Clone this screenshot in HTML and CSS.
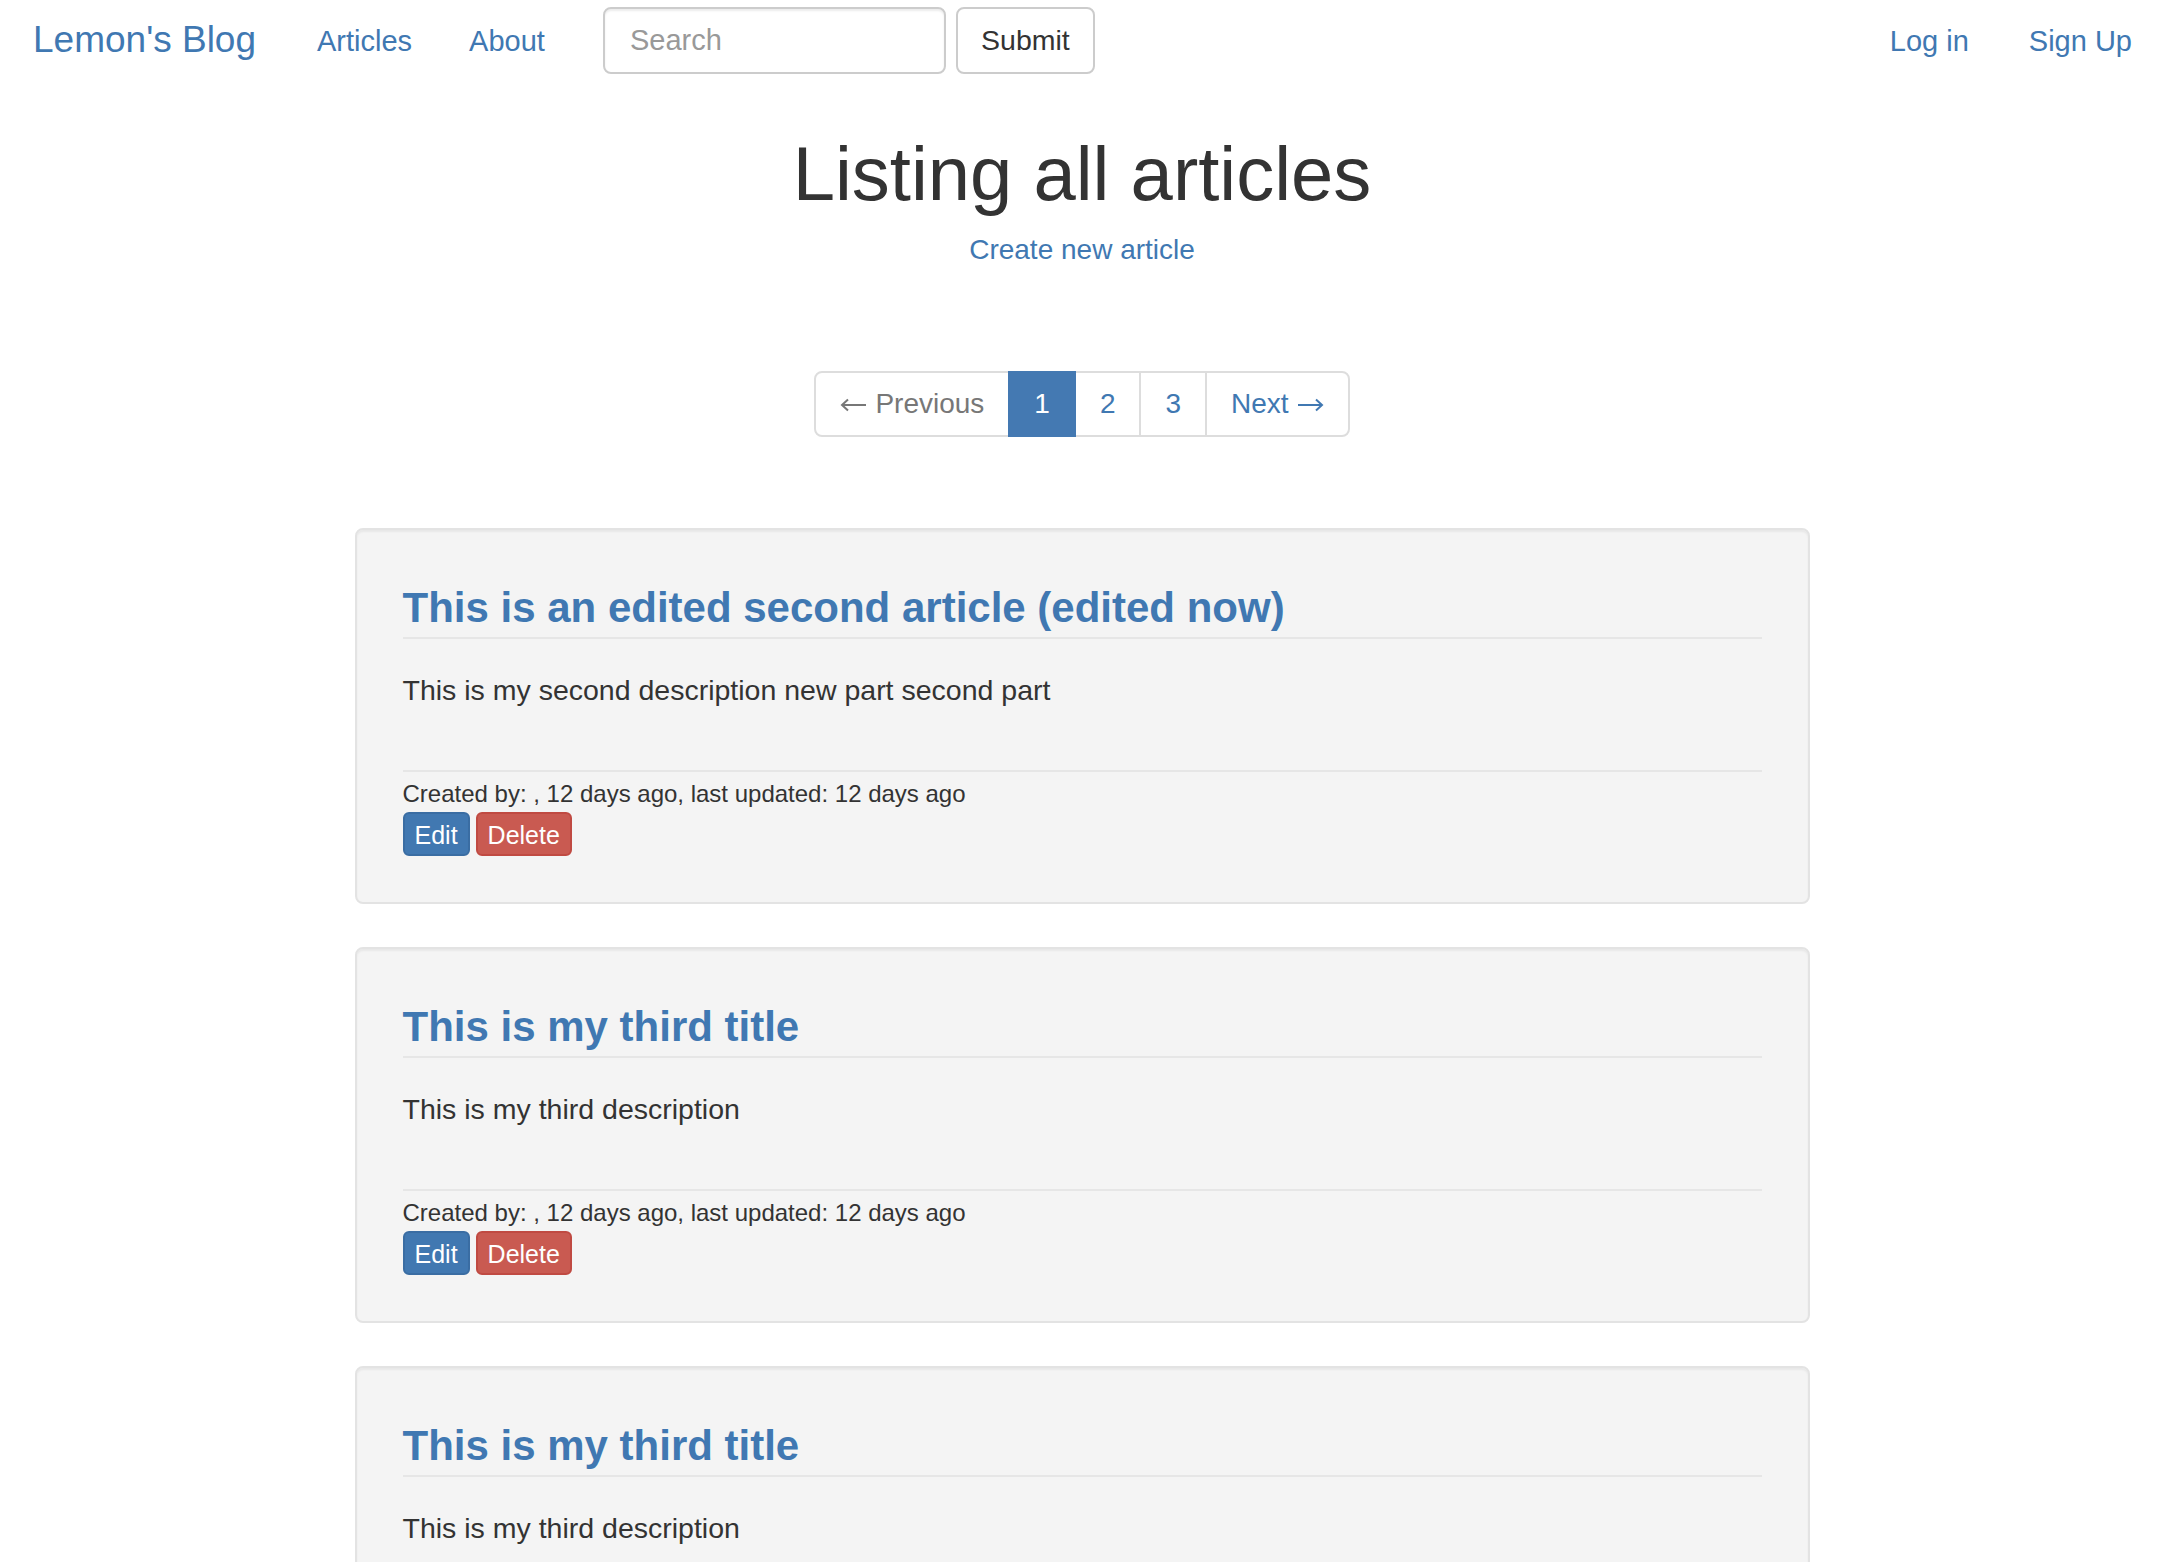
FILE: index.html
```html
<!DOCTYPE html>
<html lang="en">
<head>
<meta charset="utf-8">
<title>Lemon's Blog</title>
<link rel="stylesheet" href="styles.css">
</head>
<body>
<nav class="navbar">
  <a class="brand" href="#">Lemon's Blog</a>
  <a class="nav-link nav-articles" href="#">Articles</a>
  <a class="nav-link nav-about" href="#">About</a>
  <form class="search-form">
    <input class="search-input" type="text" placeholder="Search">
    <button class="submit-btn" type="button">Submit</button>
  </form>
  <div class="nav-right">
    <a class="nav-link" href="#">Log in</a>
    <a class="nav-link nav-signup" href="#">Sign Up</a>
  </div>
</nav>

<main class="main">
  <h1 class="page-title">Listing all articles</h1>
  <a class="create-link" href="#">Create new article</a>

  <ul class="pagination">
    <li class="page disabled"><svg class="arrow arrow-left" width="27" height="14" viewBox="0 0 27 14" aria-hidden="true"><path d="M26 7H2M8 1.5L2 7l6 5.5" fill="none" stroke="currentColor" stroke-width="2"/></svg>Previous</li>
    <li class="page active">1</li>
    <li class="page">2</li>
    <li class="page">3</li>
    <li class="page">Next<svg class="arrow arrow-right" width="27" height="14" viewBox="0 0 27 14" aria-hidden="true"><path d="M1 7h24M19 1.5L25 7l-6 5.5" fill="none" stroke="currentColor" stroke-width="2"/></svg></li>
  </ul>

  <section class="articles">
    <article class="well">
      <h2 class="article-title"><a href="#">This is an edited second article (edited now)</a></h2>
      <p class="article-desc">This is my second description new part second part</p>
      <div class="article-meta">
        <div class="meta-text">Created by: , 12 days ago, last updated: 12 days ago</div>
        <div class="actions">
          <a class="btn btn-primary" href="#">Edit</a>
          <a class="btn btn-danger" href="#">Delete</a>
        </div>
      </div>
    </article>

    <article class="well">
      <h2 class="article-title"><a href="#">This is my third title</a></h2>
      <p class="article-desc">This is my third description</p>
      <div class="article-meta">
        <div class="meta-text">Created by: , 12 days ago, last updated: 12 days ago</div>
        <div class="actions">
          <a class="btn btn-primary" href="#">Edit</a>
          <a class="btn btn-danger" href="#">Delete</a>
        </div>
      </div>
    </article>

    <article class="well">
      <h2 class="article-title"><a href="#">This is my third title</a></h2>
      <p class="article-desc">This is my third description</p>
      <div class="article-meta">
        <div class="meta-text">Created by: , 12 days ago, last updated: 12 days ago</div>
        <div class="actions">
          <a class="btn btn-primary" href="#">Edit</a>
          <a class="btn btn-danger" href="#">Delete</a>
        </div>
      </div>
    </article>
  </section>
</main>
</body>
</html>
```

FILE: styles.css
```css
* { box-sizing: border-box; }

html, body {
  margin: 0;
  padding: 0;
  background: #ffffff;
}

body {
  font-family: "Liberation Sans", Arial, Helvetica, sans-serif;
  font-size: 28px;
  color: #333333;
}

a {
  color: #4078b2;
  text-decoration: none;
}

/* ---------- navbar ---------- */
.navbar {
  height: 80px;
  display: flex;
  align-items: center;
  padding: 0 32px 0 33px;
}

.brand {
  font-size: 37px;
  line-height: 40px;
}

.nav-link {
  font-size: 29px;
  line-height: 40px;
  padding-top: 1px;
}

.nav-articles { margin-left: 61px; }
.nav-about { margin-left: 57px; }

.search-form {
  display: flex;
  margin-left: 58px;
  gap: 10px;
}

.search-input {
  width: 343px;
  height: 67px;
  border: 2px solid #cccccc;
  border-radius: 8px;
  padding: 1px 25px 0;
  font-family: inherit;
  font-size: 29px;
  color: #555555;
  background: #ffffff;
  box-shadow: inset 0 2px 2px rgba(0, 0, 0, 0.075);
  outline: none;
}

.search-input::placeholder { color: #999999; }

.submit-btn {
  width: 139px;
  height: 67px;
  border: 2px solid #cccccc;
  border-radius: 8px;
  background: #ffffff;
  font-family: inherit;
  font-size: 28.5px;
  color: #333333;
  padding: 1px 0 0;
}

.nav-right {
  margin-left: auto;
  display: flex;
  gap: 60px;
}

/* ---------- header ---------- */
.main {
  display: flex;
  flex-direction: column;
  align-items: center;
}

.page-title {
  margin: 52px 0 0;
  font-size: 76px;
  line-height: 84px;
  font-weight: normal;
  color: #333333;
}

.create-link {
  margin-top: 14px;
  font-size: 28px;
  line-height: 40px;
}

/* ---------- pagination ---------- */
.pagination {
  list-style: none;
  margin: 101px 0 0;
  padding: 0;
  display: flex;
}

.page {
  height: 66px;
  padding: 12px 24px;
  font-size: 28px;
  line-height: 40px;
  color: #4078b2;
  background: #ffffff;
  border: 2px solid #dddddd;
  margin-left: -2px;
  display: flex;
  align-items: center;
}

.page:first-child {
  margin-left: 0;
  border-radius: 8px 0 0 8px;
}

.page:last-child { border-radius: 0 8px 8px 0; }

.page.disabled { color: #777777; }

.page.active {
  background: #4479b2;
  border-color: #4479b2;
  color: #ffffff;
  position: relative;
}

.arrow {
  display: block;
  flex: none;
  margin-top: 1px;
}

.arrow-left { margin-right: 8px; }
.arrow-right { margin-left: 8px; }

/* ---------- articles ---------- */
.articles {
  margin-top: 91px;
  width: 1455px;
  display: flex;
  flex-direction: column;
  gap: 43px;
}

.well {
  background: #f4f4f4;
  border: 2px solid #e3e3e3;
  border-radius: 8px;
  box-shadow: inset 0 2px 2px rgba(0, 0, 0, 0.05);
  padding: 46px;
}

.article-title {
  margin: 7px 0 0;
  font-size: 42px;
  line-height: 50px;
  font-weight: bold;
  padding-bottom: 4px;
  border-bottom: 2px solid #e6e6e6;
}

.article-desc {
  margin: 31px 0 0;
  font-size: 28.5px;
  line-height: 40px;
  color: #333333;
}

.article-meta {
  margin-top: 60px;
  border-top: 2px solid #e6e6e6;
  padding-top: 5px;
}

.meta-text {
  font-size: 24px;
  line-height: 34px;
  color: #333333;
}

.actions {
  margin-top: 1px;
  display: flex;
  gap: 6px;
}

.btn {
  display: inline-block;
  height: 44px;
  padding: 3px 10px 0;
  font-size: 25px;
  line-height: 36px;
  color: #ffffff;
  border: 2px solid transparent;
  border-radius: 6px;
}

.btn-primary {
  background: #4178b1;
  border-color: #3a6da3;
}

.btn-danger {
  background: #c95a51;
  border-color: #c04a42;
}
```
